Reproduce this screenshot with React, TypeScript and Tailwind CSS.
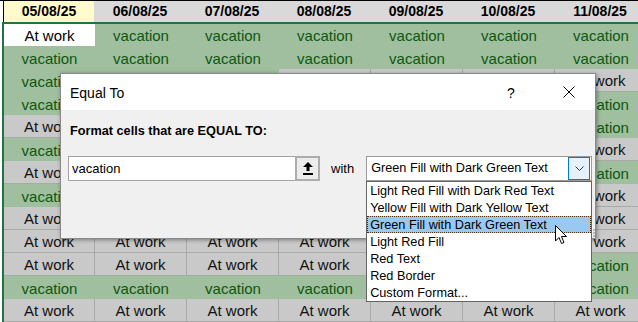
import React from "react";

const DATES = ["05/08/25", "06/08/25", "07/08/25", "08/08/25", "09/08/25", "10/08/25", "11/08/25"];

const ROWS: string[] = [
  "AVVVVVV",
  "VVVVVVV",
  "VVVAAAA",
  "VVVVVVV",
  "AAAAAAV",
  "VVVVVVA",
  "AAAAAAV",
  "VVVVVVA",
  "AAAAAAA",
  "AAAAAAA",
  "AAAAAAV",
  "VVVVVVV",
  "AAAAAAA",
];

const OPTIONS = [
  "Light Red Fill with Dark Red Text",
  "Yellow Fill with Dark Yellow Text",
  "Green Fill with Dark Green Text",
  "Light Red Fill",
  "Red Text",
  "Red Border",
  "Custom Format...",
];

function Cell({ kind, first, active }: { kind: string; first: boolean; active: boolean }) {
  const w = first ? "w-[91px]" : "w-[92px]";
  if (active) {
    return (
      <div className={`${w} shrink-0 h-full bg-white text-black flex items-center justify-center pt-[3px]`}>
        At work
      </div>
    );
  }
  if (kind === "V") {
    return (
      <div className={`${w} shrink-0 h-full bg-[#9fbf9f] text-[#0d5710] flex items-center justify-center pt-[3px]`}>
        vacation
      </div>
    );
  }
  return (
    <div
      className={`${w} shrink-0 h-full bg-[#c9c9c9] text-[#111] border-r border-b border-[#a9a9a9] flex items-center justify-center pt-[3px]`}
    >
      At work
    </div>
  );
}

export default function App() {
  return (
    <div className="relative w-[638px] h-[322px] overflow-hidden bg-white font-['Liberation_Sans',Arial,sans-serif]">
      {/* Header row */}
      <div className="flex h-[22px] border-t border-black">
        <div className="w-[3px] shrink-0" />
        <div className="w-[91px] shrink-0 border-l border-black bg-[#fffbcc] flex items-center justify-center text-[14px] font-bold text-black">
          {DATES[0]}
        </div>
        {DATES.slice(1).map((d) => (
          <div
            key={d}
            className="w-[92px] shrink-0 bg-[#d9d9d9] flex items-center justify-center text-[14px] font-bold text-black"
          >
            {d}
          </div>
        ))}
      </div>

      {/* Body with selection border */}
      <div className="flex">
        <div className="w-[2px] shrink-0" />
        <div className="flex flex-col border-l-2 border-t-2 border-[#217346] text-[15px]">
          {ROWS.map((row, r) => (
            <div key={r} className={`flex ${r === 0 ? "h-[22px]" : "h-[23px]"}`}>
              {row.split("").map((k, c) => (
                <Cell key={c} kind={k} first={c === 0} active={r === 0 && c === 0} />
              ))}
            </div>
          ))}
        </div>
      </div>

      {/* Dialog */}
      <div className="absolute left-[60px] top-[73px] w-[536px] h-[166px] border border-[#8a8a8a] bg-[#f0f0f0] shadow-[1px_1px_4px_rgba(0,0,0,0.4)] flex flex-col text-black">
        <div className="h-[36px] bg-white flex items-center shrink-0">
          <span className="flex-1 pl-[9px] text-[14px] pt-[2px]">Equal To</span>
          <span className="w-[14px] text-center text-[14px] mr-[45px] pt-[2px]">?</span>
          <svg width="12" height="12" viewBox="0 0 12 12" className="mr-[20px]">
            <path d="M0.5 0.5 L11.5 11.5 M11.5 0.5 L0.5 11.5" stroke="#000" strokeWidth="1" fill="none" />
          </svg>
        </div>
        <div className="flex flex-col pl-[7px]">
          <div className="ml-[2px] mt-[14px] text-[12.7px] font-bold leading-[15px]">Format cells that are EQUAL TO:</div>
          <div className="flex items-center mt-[17px]">
            <div className="w-[252px] h-[25px] shrink-0 border border-[#a3a3a3] bg-white flex items-center">
              <span className="flex-1 pl-[3px] text-[13px] pt-[1px]">vacation</span>
              <div className="w-[25px] h-[25px] shrink-0 -mr-px border-2 border-[#adadad] bg-[#ececec] flex items-center justify-center">
                <svg width="10" height="13" viewBox="0 0 10 13">
                  <path d="M5 0 L0 5 L3.5 5 L3.5 9 L6.5 9 L6.5 5 L10 5 Z" fill="#000" />
                  <rect x="0" y="11" width="10" height="2" fill="#000" />
                </svg>
              </div>
            </div>
            <span className="ml-[11px] shrink-0 text-[13px] pt-[1px]">with</span>
            <div className="relative ml-[12px] w-[226px] h-[25px] shrink-0 border border-[#9a9a9a] bg-white flex items-center">
              <span className="flex-1 pl-[4px] text-[12.7px] pt-[1px] whitespace-nowrap">Green Fill with Dark Green Text</span>
              <div className="w-[22px] h-[23px] shrink-0 mr-px bg-[#e5f1fb] border border-[#0078d7] flex items-center justify-center">
                <svg width="9" height="5" viewBox="0 0 9 5">
                  <path d="M0.5 0.5 L4.5 4.5 L8.5 0.5" stroke="#333" strokeWidth="1" fill="none" />
                </svg>
              </div>
              {/* Dropdown list */}
              <div className="absolute left-[-1px] top-[24px] w-[226px] border border-[#646464] bg-white flex flex-col z-10">
                {OPTIONS.map((o, i) => (
                  <div
                    key={o}
                    className={
                      i === 2
                        ? "h-[17px] bg-[#99c9ef] border border-dotted border-[#4a3218] pl-[2px] pt-[1px] text-[12.7px] leading-[14px] text-black whitespace-nowrap"
                        : "h-[17px] pl-[3px] pt-[2px] text-[12.7px] leading-[15px] text-black whitespace-nowrap"
                    }
                  >
                    {o}
                  </div>
                ))}
              </div>
            </div>
          </div>
        </div>
        {/* size grip */}
        <div className="absolute right-[0px] bottom-[1px] flex flex-col gap-[1px]">
          <div className="w-[2px] h-[2px] bg-[#b8b8b8]" />
          <div className="w-[2px] h-[2px] bg-[#b8b8b8]" />
          <div className="w-[2px] h-[2px] bg-[#b8b8b8]" />
        </div>
      </div>

      {/* Mouse cursor */}
      <svg className="absolute left-[555px] top-[225px] z-20" width="13" height="20" viewBox="0 0 13 20">
        <path
          d="M0.5 0.5 L0.5 16 L4 12.5 L6.5 18.5 L9 17.5 L6.5 11.5 L11.5 11.5 Z"
          fill="#fff"
          stroke="#000"
          strokeWidth="1"
          strokeLinejoin="round"
        />
      </svg>
    </div>
  );
}
